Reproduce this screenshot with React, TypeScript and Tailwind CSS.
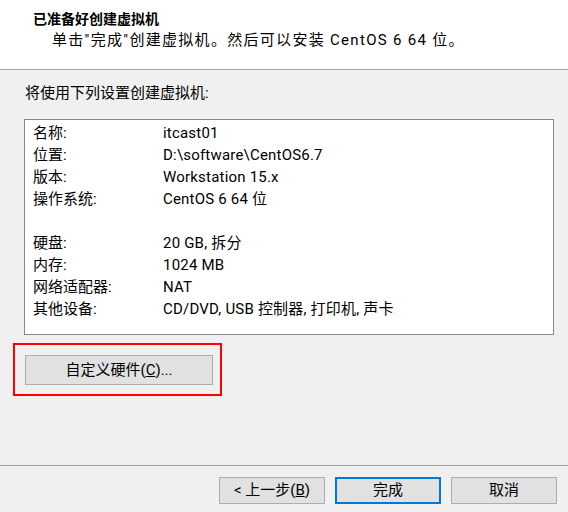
import React from "react";

const font = { fontFamily: 'Roboto, "Noto Sans CJK SC", sans-serif' };

const rows: [string, string][] = [
  ["名称:", "itcast01"],
  ["位置:", "D:\\software\\CentOS6.7"],
  ["版本:", "Workstation 15.x"],
  ["操作系统:", "CentOS 6 64 位"],
  ["", ""],
  ["硬盘:", "20 GB, 拆分"],
  ["内存:", "1024 MB"],
  ["网络适配器:", "NAT"],
  ["其他设备:", "CD/DVD, USB 控制器, 打印机, 声卡"],
];

export default function App() {
  return (
    <div
      className="w-[568px] h-[512px] bg-[#f0f0f0] flex flex-col text-black overflow-hidden"
      style={font}
    >
      <div className="h-[70px] bg-white border-b border-[#a0a0a0] flex flex-col pt-[7px]">
        <div
          className="pl-[33px] text-[14px] font-bold leading-[22px]"
          style={{ fontFamily: '"Noto Sans CJK SC", sans-serif' }}
        >
          已准备好创建虚拟机
        </div>
        <div className="pl-[52px] text-[15px] tracking-[1.3px] leading-[22px]">
          单击"完成"创建虚拟机。然后可以安装 CentOS 6 64 位。
        </div>
      </div>
      <div className="flex flex-col pl-[24px] pr-[14px] pt-[12px]">
        <div className="pl-[1px] text-[15px] leading-[22px]">将使用下列设置创建虚拟机:</div>
        <div className="mt-[15px] w-[530px] h-[216px] bg-white border border-[#828790] pt-[2px] pl-[8px]">
          {rows.map(([k, v], i) => (
            <div key={i} className="flex h-[22px] items-center text-[15px] leading-[22px]">
              <div className="w-[130px]">{k}</div>
              <div className="tracking-[0.2px]">{v}</div>
            </div>
          ))}
        </div>
      </div>
      <div className="mt-[8px] ml-[13px] w-[209px] h-[53px] border-2 border-[#ff0000] pt-[10px] pl-[10px]">
        <button className="w-[188px] h-[30px] bg-[#e1e1e1] border border-[#adadad] text-[15px] leading-[28px] flex items-center justify-center">
          自定义硬件(<span className="underline">C</span>)...
        </button>
      </div>
      <div className="mt-[69px] border-t border-[#a0a0a0]" />
      <div className="mt-[11px] flex justify-end gap-[10px] pr-[11px]">
        <button className="w-[106px] h-[27px] bg-[#e1e1e1] border border-[#adadad] text-[15px] flex items-center justify-center">
          &lt; 上一步(<span className="underline">B</span>)
        </button>
        <button className="w-[106px] h-[27px] bg-[#e1e1e1] border-2 border-[#0078d7] text-[15px] flex items-center justify-center">
          完成
        </button>
        <button className="w-[106px] h-[27px] bg-[#e1e1e1] border border-[#adadad] text-[15px] flex items-center justify-center">
          取消
        </button>
      </div>
    </div>
  );
}
